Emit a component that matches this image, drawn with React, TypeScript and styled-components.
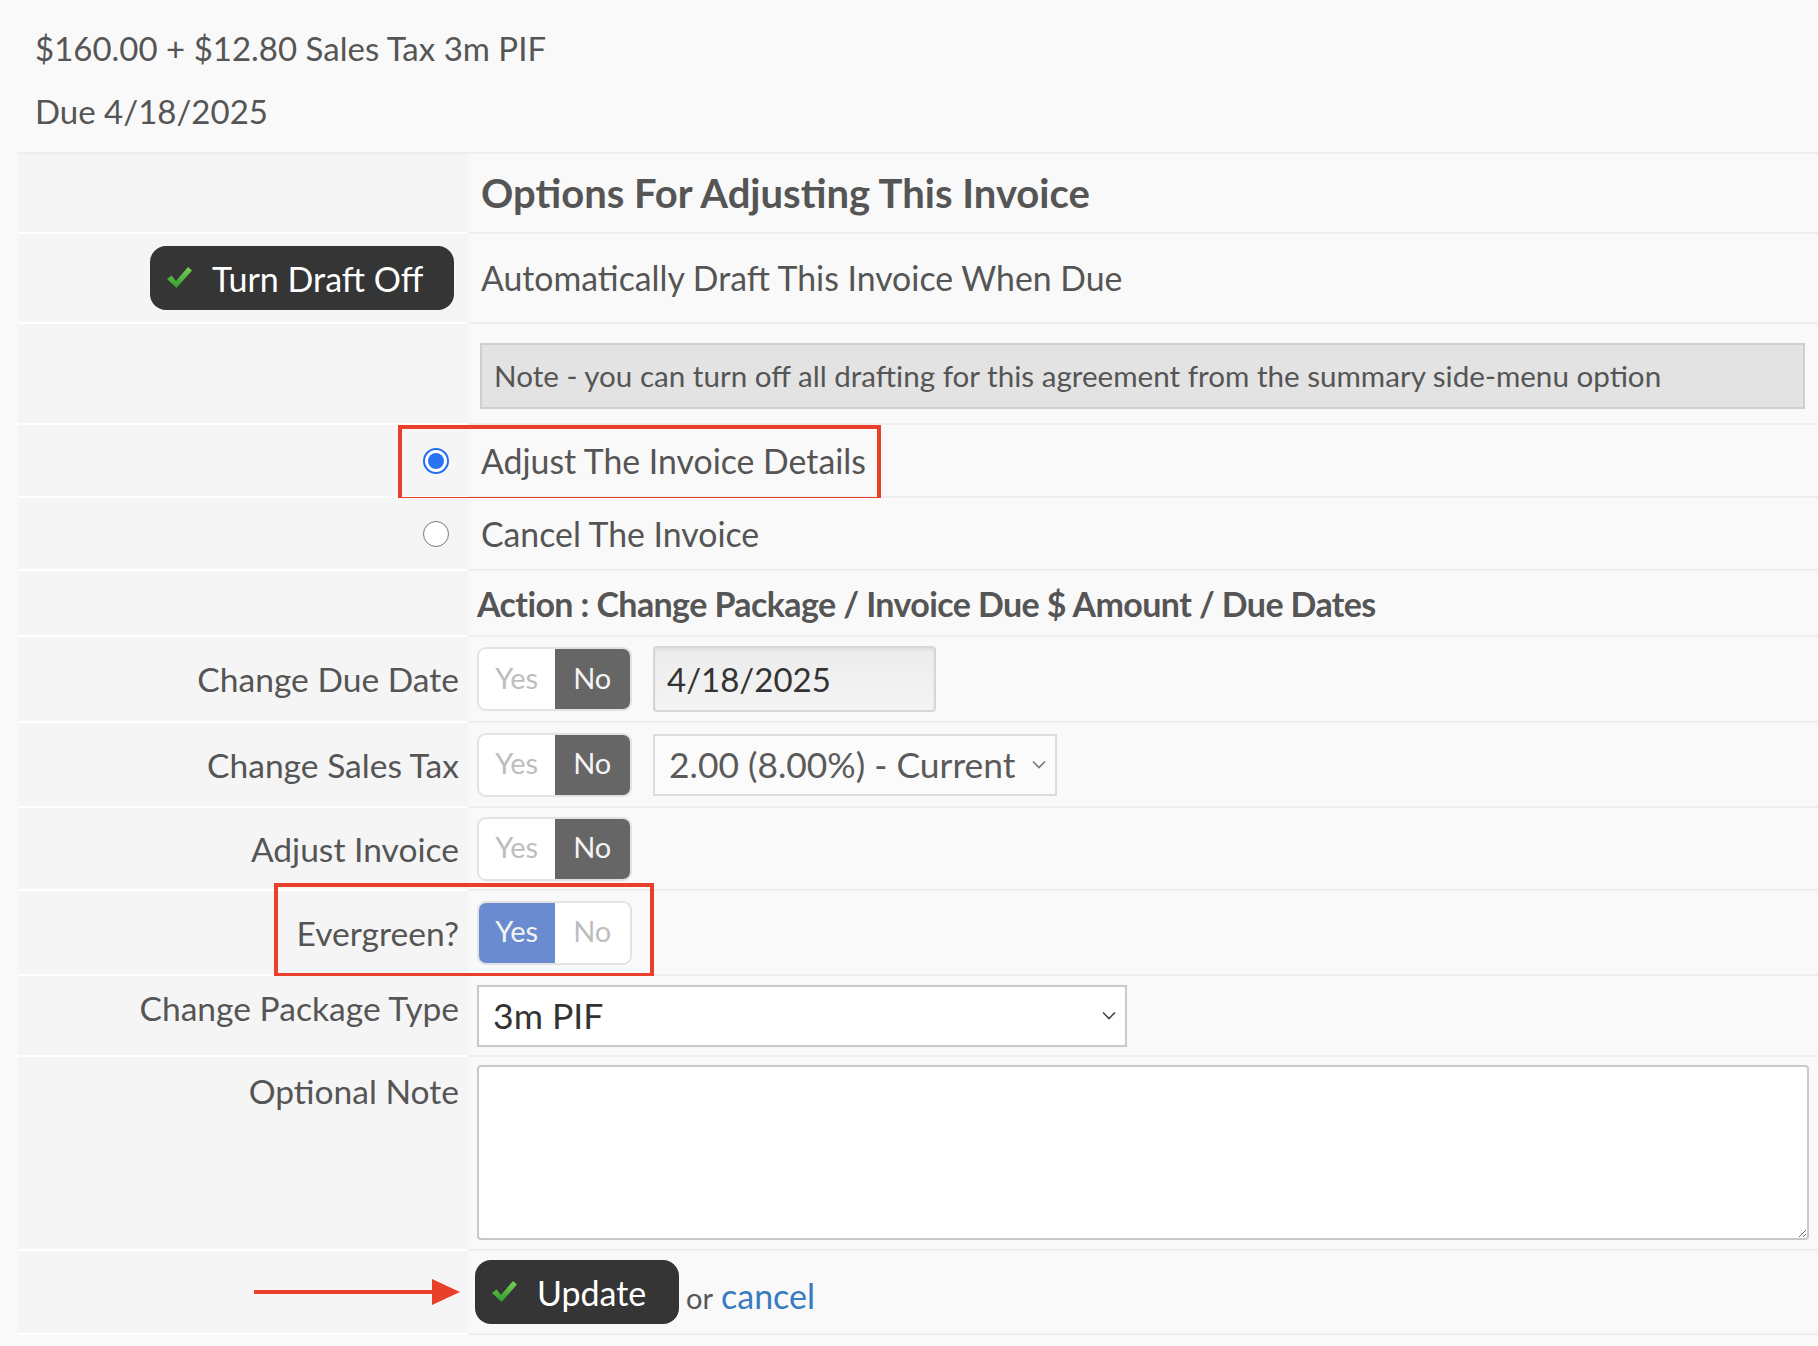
import React from 'react';
import styled, { createGlobalStyle } from 'styled-components';

const Global = createGlobalStyle`
  html, body { margin: 0; padding: 0; background: #f9f9f9; }
  body { font-family: Lato, "Liberation Sans", sans-serif; color: #555; }
  * { box-sizing: border-box; }
`;

const Page = styled.div`
  width: 1818px;
  height: 1346px;
  overflow: hidden;
  background: #f9f9f9;
  padding-left: 18px;
`;

const Summary = styled.div`
  height: 152px;
  padding: 17px 0 0 17px;
`;

const SummaryLine = styled.div`
  font-size: 33px;
  line-height: 63px;
  color: #555;
`;

const Table = styled.div`
  border-top: 2px solid #eeeeee;
`;

const Row = styled.div<{ $h: number }>`
  position: relative;
  display: grid;
  grid-template-columns: 450px 1fr;
  height: ${(p) => p.$h}px;
`;

const LabelCell = styled.div<{ $top?: number }>`
  background: #f5f5f5;
  border-bottom: 2px solid #ffffff;
  display: flex;
  justify-content: flex-end;
  align-items: ${(p) => (p.$top !== undefined ? 'flex-start' : 'center')};
  padding: ${(p) => (p.$top !== undefined ? `${p.$top}px` : '0')} 9px 0 0;
  font-size: 33.6px;
  line-height: 40px;
  color: #555;
`;

const ValueCell = styled.div<{ $top?: number }>`
  background: #f9f9f9;
  border-bottom: 2px solid #eeeeee;
  display: flex;
  align-items: ${(p) => (p.$top !== undefined ? 'flex-start' : 'center')};
  padding: ${(p) => (p.$top !== undefined ? `${p.$top}px` : '0')} 9px 0 9px;
  gap: 21px;
  font-size: 34px;
  color: #555;
`;

const Title = styled.div`
  margin-left: 4px;
  font-size: 40px;
  font-weight: 700;
  color: #555;
`;

const Plain = styled.div`
  margin-left: 4px;
  font-size: 33.8px;
  color: #555;
`;

const ActionHeading = styled.div`
  font-size: 34px;
  font-weight: 700;
  color: #555;
  letter-spacing: -0.6px;
`;

const Note = styled.div`
  flex: 1;
  margin: 4px 4px 0 3px;
  height: 66px;
  display: flex;
  align-items: center;
  padding-left: 12px;
  background: #e3e3e3;
  border: 2px solid #cfcfcf;
  font-size: 29.6px;
  color: #555;
`;

const DarkButton = styled.button<{ $w: number }>`
  width: ${(p) => p.$w}px;
  height: 64px;
  border: none;
  border-radius: 16px;
  background: #353535;
  color: #ffffff;
  display: flex;
  align-items: center;
  gap: 19px;
  padding: 0 0 0 16px;
  font-family: Lato, "Liberation Sans", sans-serif;
  font-size: 34px;
  cursor: pointer;
`;

const RadioDot = styled.span<{ $checked: boolean }>`
  width: 26px;
  height: 26px;
  margin-right: 10px;
  border-radius: 50%;
  background: #ffffff;
  border: ${(p) => (p.$checked ? '2px solid #1f6ff0' : '1.5px solid #777')};
  display: flex;
  align-items: center;
  justify-content: center;
  &::after {
    content: '';
    display: ${(p) => (p.$checked ? 'block' : 'none')};
    width: 16px;
    height: 16px;
    border-radius: 50%;
    background: #2a74f3;
  }
`;

const ToggleWrap = styled.div`
  display: flex;
  width: 155px;
  height: 64px;
  border-radius: 9px;
  overflow: hidden;
  border: 2px solid #e2e2e2;
  flex-shrink: 0;
`;

const Seg = styled.div<{ $on: boolean; $tone: 'dark' | 'blue' }>`
  flex: 1;
  display: flex;
  align-items: center;
  justify-content: center;
  padding-bottom: 4px;
  font-size: 29px;
  background: ${(p) => (p.$on ? (p.$tone === 'blue' ? '#6a8bd0' : '#666666') : '#ffffff')};
  color: ${(p) => (p.$on ? '#f4f4f4' : '#bdbdbd')};
`;

const DateBox = styled.div`
  width: 283px;
  height: 66px;
  border: 2px solid #d6d6d6;
  border-radius: 4px;
  background: linear-gradient(#ececec, #f4f4f4);
  box-shadow: inset 0 2px 3px rgba(0, 0, 0, 0.06);
  display: flex;
  align-items: center;
  padding-left: 12px;
  font-size: 33px;
  color: #333;
`;

const SelectBox = styled.div<{ $w: number; $dark?: boolean; $bg: string }>`
  width: ${(p) => p.$w}px;
  height: 62px;
  border: 2px solid ${(p) => (p.$dark ? '#c9c9c9' : '#dcdcdc')};
  background: ${(p) => p.$bg};
  display: flex;
  align-items: center;
  justify-content: space-between;
  padding: 0 9px 0 14px;
  font-size: ${(p) => (p.$dark ? 35.6 : 35.4)}px;
  color: ${(p) => (p.$dark ? '#333' : '#5a5a5a')};
`;

const NoteArea = styled.textarea`
  flex: 1;
  height: 175px;
  border: 2px solid #c9c9c9;
  border-radius: 4px;
  background: #fff;
  font-family: Lato, "Liberation Sans", sans-serif;
  font-size: 30px;
  resize: vertical;
  outline: none;
`;

const Or = styled.span`
  font-size: 29px;
  color: #555;
  margin-left: -14px;
  margin-top: 6px;
`;

const CancelLink = styled.a`
  font-size: 34px;
  color: #3a7bbf;
  text-decoration: none;
  margin-left: 8px;
`;

const Highlight = styled.div<{ $l: number; $t: number; $w: number; $h: number }>`
  position: absolute;
  left: ${(p) => p.$l}px;
  top: ${(p) => p.$t}px;
  width: ${(p) => p.$w}px;
  height: ${(p) => p.$h}px;
  border: 4px solid #e8402a;
  pointer-events: none;
`;

const Check = () => (
  <svg width="27" height="24" viewBox="0 0 27 24">
    <defs>
      <linearGradient id="g" x1="0" y1="0" x2="0" y2="1">
        <stop offset="0" stopColor="#7ad15a" />
        <stop offset="1" stopColor="#2f9a2a" />
      </linearGradient>
    </defs>
    <path d="M1 13 L5.5 9.5 L10 15 L22 1 L26 4.5 L10.5 22 Z" fill="url(#g)" />
  </svg>
);

const Chevron = ({ color }: { color: string }) => (
  <svg width="14" height="9" viewBox="0 0 14 9">
    <polyline points="1,1.5 7,7.5 13,1.5" fill="none" stroke={color} strokeWidth="1.6" />
  </svg>
);

const Arrow = () => (
  <svg width="206" height="28" viewBox="0 0 206 28">
    <rect x="0" y="12" width="182" height="4" fill="#e8402a" />
    <polygon points="178,1 206,14 178,27" fill="#e8402a" />
  </svg>
);

const Toggle = ({ on, tone = 'dark' }: { on: 'yes' | 'no'; tone?: 'dark' | 'blue' }) => (
  <ToggleWrap>
    <Seg $on={on === 'yes'} $tone={tone}>Yes</Seg>
    <Seg $on={on === 'no'} $tone={tone}>No</Seg>
  </ToggleWrap>
);

export default function App() {
  return (
    <>
      <Global />
      <Page>
        <Summary>
          <SummaryLine>$160.00 + $12.80 Sales Tax 3m PIF</SummaryLine>
          <SummaryLine>Due 4/18/2025</SummaryLine>
        </Summary>
        <Table>
          <Row $h={80}>
            <LabelCell />
            <ValueCell>
              <Title>Options For Adjusting This Invoice</Title>
            </ValueCell>
          </Row>
          <Row $h={90}>
            <LabelCell style={{ paddingRight: 14 }}>
              <DarkButton $w={304}>
                <Check />
                Turn Draft Off
              </DarkButton>
            </LabelCell>
            <ValueCell>
              <Plain>Automatically Draft This Invoice When Due</Plain>
            </ValueCell>
          </Row>
          <Row $h={101}>
            <LabelCell />
            <ValueCell>
              <Note>Note - you can turn off all drafting for this agreement from the summary side-menu option</Note>
            </ValueCell>
          </Row>
          <Row $h={73}>
            <LabelCell>
              <RadioDot $checked />
            </LabelCell>
            <ValueCell>
              <Plain>Adjust The Invoice Details</Plain>
            </ValueCell>
            <Highlight $l={380} $t={0} $w={483} $h={76} />
          </Row>
          <Row $h={73}>
            <LabelCell>
              <RadioDot $checked={false} />
            </LabelCell>
            <ValueCell>
              <Plain>Cancel The Invoice</Plain>
            </ValueCell>
          </Row>
          <Row $h={66}>
            <LabelCell />
            <ValueCell>
              <ActionHeading>Action : Change Package / Invoice Due $ Amount / Due Dates</ActionHeading>
            </ValueCell>
          </Row>
          <Row $h={86}>
            <LabelCell>Change Due Date</LabelCell>
            <ValueCell>
              <Toggle on="no" />
              <DateBox>4/18/2025</DateBox>
            </ValueCell>
          </Row>
          <Row $h={85}>
            <LabelCell>Change Sales Tax</LabelCell>
            <ValueCell>
              <Toggle on="no" />
              <SelectBox $w={404} $bg="#fbfbfb">
                2.00 (8.00%) - Current
                <Chevron color="#777" />
              </SelectBox>
            </ValueCell>
          </Row>
          <Row $h={83}>
            <LabelCell>Adjust Invoice</LabelCell>
            <ValueCell>
              <Toggle on="no" />
            </ValueCell>
          </Row>
          <Row $h={85}>
            <LabelCell>Evergreen?</LabelCell>
            <ValueCell>
              <Toggle on="yes" tone="blue" />
            </ValueCell>
            <Highlight $l={256} $t={-8} $w={380} $h={94} />
          </Row>
          <Row $h={81}>
            <LabelCell $top={12}>Change Package Type</LabelCell>
            <ValueCell>
              <SelectBox $w={650} $dark $bg="#ffffff">
                3m PIF
                <Chevron color="#444" />
              </SelectBox>
            </ValueCell>
          </Row>
          <Row $h={194}>
            <LabelCell $top={14}>Optional Note</LabelCell>
            <ValueCell $top={8}>
              <NoteArea />
            </ValueCell>
          </Row>
          <Row $h={84}>
            <LabelCell style={{ paddingRight: 8 }}>
              <Arrow />
            </LabelCell>
            <ValueCell style={{ paddingLeft: 7 }}>
              <DarkButton $w={204}>
                <Check />
                Update
              </DarkButton>
              <Or>
                or<CancelLink href="#">cancel</CancelLink>
              </Or>
            </ValueCell>
          </Row>
        </Table>
      </Page>
    </>
  );
}
